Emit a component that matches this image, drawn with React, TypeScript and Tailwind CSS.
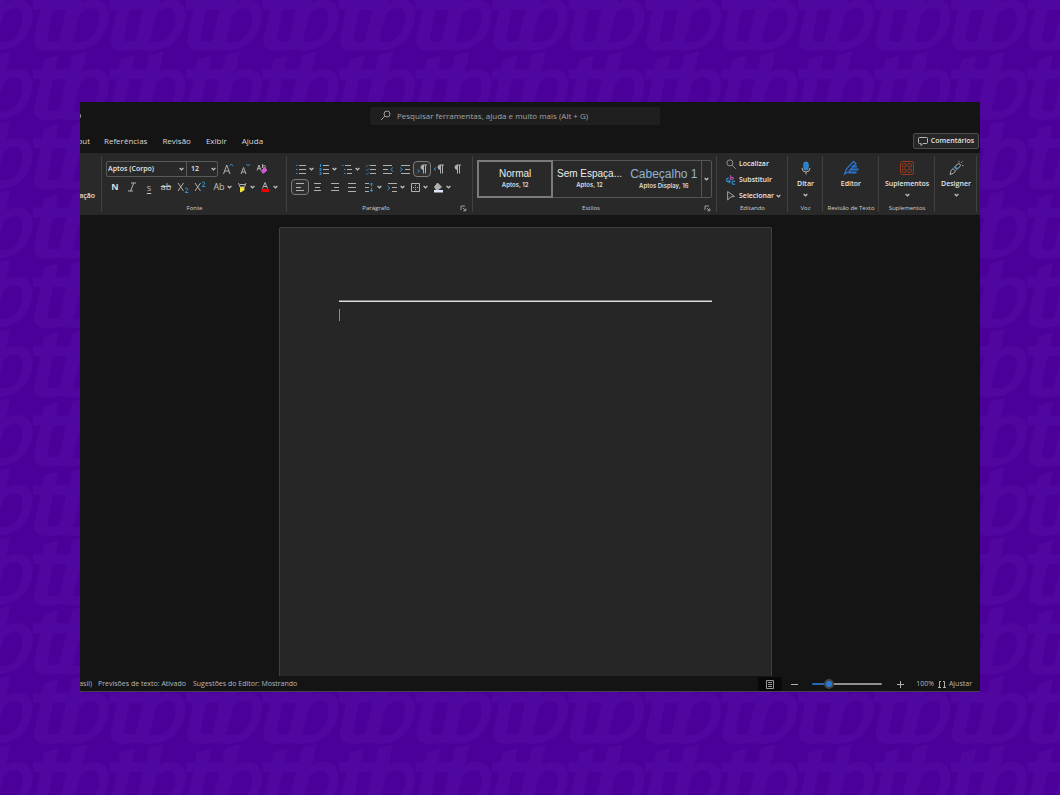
import React, { useState } from 'react';
import clsx from 'clsx';

const blue = '#2f8fd0';
const grey = '#b0b0b0';

const tabs = ['Referências', 'Revisão', 'Exibir', 'Ajuda'];

const styles = [
  { id: 'normal', name: 'Normal', detail: 'Aptos, 12', title: 'text-[10px] leading-3 text-[#ececec]' },
  { id: 'spacing', name: 'Sem Espaça...', detail: 'Aptos, 12', title: 'text-[10px] leading-3 text-[#ececec]' },
  { id: 'heading', name: 'Cabeçalho 1', detail: 'Aptos Display, 16', title: 'text-[12px] leading-[14px] text-[#8fb4d2]' },
];

type IconProps = { children: React.ReactNode; className?: string; size?: number };

// 16x16 canvas shared by every ribbon icon
const Icon = ({ children, className, size = 16 }: IconProps) => (
  <svg
    viewBox="0 0 16 16"
    width={size}
    height={size}
    fill="none"
    stroke={grey}
    strokeWidth="1"
    className={clsx('shrink-0', className)}
    aria-hidden="true"
  >
    {children}
  </svg>
);

const Chevron = ({ className }: { className?: string }) => (
  <svg
    viewBox="0 0 5 4"
    width="5"
    height="4"
    fill="none"
    stroke="#c0c0c0"
    strokeWidth="1.2"
    className={clsx('shrink-0', className)}
    aria-hidden="true"
  >
    <path d="M.6 1l1.900 1.800L4.400 1" />
  </svg>
);

type ToolProps = { label: string; children: React.ReactNode; active?: boolean };

const Tool = ({ label, children, active }: ToolProps) => (
  <button
    aria-label={label}
    aria-pressed={active}
    className={clsx(
      'flex h-4 shrink-0 items-center justify-center text-[9px] leading-4 text-[#c4c4c4]',
      active ? '-mx-px w-[18px] rounded-sm border border-[#7c7c7c] bg-[#303030]' : 'w-4'
    )}
  >
    {children}
  </button>
);

const SplitTool = ({ label, children }: ToolProps) => (
  <button aria-label={label} className="flex h-4 w-[23px] shrink-0 items-center text-[9px] leading-4 text-[#c4c4c4]">
    <span className="flex w-4 justify-center">{children}</span>
    <Chevron />
  </button>
);

const Launcher = () => (
  <button aria-label="Mais opções" className="absolute right-[6px] bottom-[3px]">
    <svg viewBox="0 0 7 7" width="7" height="7" fill="none" stroke="#a8a8a8" strokeWidth="0.9">
      <path d="M1 5V1h4M3 3l2.6 2.6M3.4 5.8h2.4V3.4" />
    </svg>
  </button>
);

type GroupProps = { label?: string; className: string; launcher?: boolean; children: React.ReactNode };

const Group = ({ label, className, launcher, children }: GroupProps) => (
  <section className={clsx('relative flex shrink-0 flex-col justify-between', className)}>
    {children}
    <span
      className={clsx(
        'mb-[3px] block h-2 text-center text-[6px] leading-2 whitespace-nowrap text-[#d0d0d0]',
        launcher && 'pr-2'
      )}
    >
      {label}
    </span>
    {launcher && <Launcher />}
    <span className="absolute top-[3px] right-0 bottom-[3px] w-px bg-[#404040]" />
  </section>
);

type BigToolProps = { label: string; icon: React.ReactNode; menu?: boolean };

const BigTool = ({ label, icon, menu }: BigToolProps) => (
  <button className="-mb-1 flex flex-col items-center pt-[7px] text-[7px] font-semibold text-[#e4e4e4]">
    {icon}
    <span className="leading-4">{label}</span>
    {menu && <Chevron className="mt-px" />}
  </button>
);

// Small line stacks used by the list and alignment buttons
const lines = (rows: number[][]) => rows.map(([x1, x2, y]) => <path key={y} d={`M${x1} ${y}H${x2}`} />);

const Backdrop = () => (
  <svg className="absolute inset-0 h-full w-full" aria-hidden="true">
    <defs>
      <pattern id="mark" x="33" y="-18.3" width="76.5" height="69.3" patternUnits="userSpaceOnUse">
        <path
          fill="#50079f"
          fillRule="evenodd"
          d="M0 18H9L11 8.5L25.5 4.5L22.500 18H36.500L39.500 4L54 .5L49.500 21Q57 17 64 18Q76 20 76 34Q75 51 64 61Q54 69 41 69Q35 69 29 67.800Q22 69 12 69Q1 69 1 60Q1 57 2 53L7.500 28H0ZM20 28L15 53Q13.500 60 18 60H24Q26 60 26.800 57L33.500 28ZM47 32L40 60Q46 61.500 53 59.500Q62 55 65.500 42Q68 27 60 26.500Q52 26 47 32Z"
        />
      </pattern>
    </defs>
    <rect width="100%" height="100%" fill="#4b0099" />
    <rect width="100%" height="100%" fill="url(#mark)" />
  </svg>
);

const FontGroup = () => (
  <Group label="Fonte" className="w-[185px]">
    <div className="flex flex-col gap-[2px] pt-2 pl-1">
      <div className="flex items-center">
        <div className="flex h-4 rounded-xs border border-[#5a5a5a] text-[7px] font-semibold text-[#e8e8e8]">
          <label className="relative flex w-[80px] items-center border-r border-[#5a5a5a]">
            <select aria-label="Fonte" className="w-full appearance-none bg-transparent pl-px leading-3 outline-none">
              <option>Aptos (Corpo)</option>
            </select>
            <Chevron className="absolute right-[2px]" />
          </label>
          <label className="relative flex w-[30px] items-center">
            <select aria-label="Tamanho da fonte" className="w-full appearance-none bg-transparent pl-1 leading-3 outline-none">
              <option>12</option>
            </select>
            <Chevron className="absolute right-px" />
          </label>
        </div>
        <div className="flex gap-px pl-[2px]">
          <Tool label="Aumentar fonte">
            <Icon>
              <path d="M3.500 13L6.800 4L10 13M4.500 10h4.500" />
              <path d="M9.500 5l1.800-2L13 5" stroke={blue} />
            </Icon>
          </Tool>
          <Tool label="Diminuir fonte">
            <Icon>
              <path d="M4 13L6.500 6.500L9 13M5 11h3" />
              <path d="M9.500 3l1.800 2L13 3" stroke={blue} />
            </Icon>
          </Tool>
          <Tool label="Limpar formatação">
            <Icon>
              <path d="M3 9.500L5 4l2 5.500M3.800 7.700h2.500M8.500 3v4M8.500 5q3-1.500 3 .7q0 1.800-2.500 1.300" />
              <path d="M7.500 9.500L10.500 6.500L13 9L10 12H8.500Z" fill="#c65bcb" stroke="#c65bcb" />
            </Icon>
          </Tool>
        </div>
      </div>
      <div className="flex gap-px pl-px">
        <Tool label="Negrito"><b className="font-bold text-[#dcdcdc]">N</b></Tool>
        <Tool label="Itálico">
          <Icon><path d="M7 4h5M4 12h5M9.800 4L6.500 12" /></Icon>
        </Tool>
        <Tool label="Sublinhado"><span className="text-[8px] leading-[9px] underline underline-offset-2">S</span></Tool>
        <Tool label="Tachado"><span className="line-through">ab</span></Tool>
        <Tool label="Subscrito">
          <Icon>
            <path d="M3 4l5.500 8M8.500 4L3 12" />
            <path d="M10 10q.3-1 1.500-1t1.300 1.200Q12.500 11.500 10 13.500h3.300" stroke={blue} />
          </Icon>
        </Tool>
        <Tool label="Sobrescrito">
          <Icon>
            <path d="M3 4l5.500 8M8.500 4L3 12" />
            <path d="M10 4q.3-1 1.500-1t1.300 1.200Q12.500 5.500 10 7.500h3.300" stroke={blue} />
          </Icon>
        </Tool>
        <div className="flex pl-[2px]">
          <SplitTool label="Maiúsculas e minúsculas">Ab</SplitTool>
          <SplitTool label="Cor do realce">
            <Icon>
              <path d="M4.500 4l1.500 4h4.500L12 4M6 5.500h5" />
              <path d="M6.500 8.500h3.500v2.500l-3.500 2z" fill="#f2e53a" stroke="#f2e53a" />
            </Icon>
          </SplitTool>
          <SplitTool label="Cor da fonte">
            <Icon>
              <path d="M5.500 9.500L8 3.500L10.500 9.500M6.300 7.500h3.400" />
              <path d="M4.500 10h7.500v3h-7.500z" fill="#ee0000" stroke="none" />
            </Icon>
          </SplitTool>
        </div>
      </div>
    </div>
  </Group>
);

const Pilcrow = () => (
  <>
    <path d="M9.500 4v8.500M11.500 4v8.500M13 4H9" />
    <path d="M9.500 4Q7 4 7 6.200T9.500 8.500Z" fill={grey} />
  </>
);

const ParagraphGroup = () => (
  <Group label="Parágrafo" className="w-[186px]" launcher>
    <div className="flex flex-col gap-[2px] pt-2 pl-[5px]">
      <div className="flex gap-px pl-px">
        <div className="flex">
          <SplitTool label="Marcadores">
            <Icon>
              {lines([[6, 13, 4.5], [6, 13, 8.5], [6, 13, 12.5]])}
              <path d="M3 4.500h1.500M3 8.500h1.500M3 12.500h1.500" stroke={blue} />
            </Icon>
          </SplitTool>
          <SplitTool label="Numeração">
            <Icon>
              {lines([[7, 13, 4.5], [7, 13, 8.5], [7, 13, 12.5]])}
              <path d="M4.500 3v3M3.500 7.500h1.500v2h-1.500M3.500 11.500h1.500v2h-1.500" stroke={blue} />
            </Icon>
          </SplitTool>
          <SplitTool label="Lista de vários níveis">
            <Icon>
              {lines([[6, 12, 4.5], [8, 13, 8.5], [8, 13, 12.5]])}
              <path d="M3 4.500h1.500M5 8.500h1.500M5 12.500h1.500" stroke={blue} />
            </Icon>
          </SplitTool>
        </div>
        <Tool label="Lista de tarefas">
          <Icon>
            {lines([[7, 13, 4.5], [7, 13, 8.5], [7, 13, 12.5]])}
            <path d="M3 4.500l1 1l2-2M3 8.500l1 1l2-2M3 12.500l1 1l2-2" stroke={blue} strokeWidth=".8" />
          </Icon>
        </Tool>
        <Tool label="Diminuir recuo">
          <Icon>
            {lines([[3, 12, 4.5], [3, 8, 8.5], [3, 12, 12.5]])}
            <path d="M13 6.500l-2.500 2l2.500 2" stroke={blue} />
          </Icon>
        </Tool>
        <Tool label="Aumentar recuo">
          <Icon>
            {lines([[4, 13, 4.5], [8, 13, 8.5], [4, 13, 12.5]])}
            <path d="M3 6.500l2.500 2l-2.500 2" stroke={blue} />
          </Icon>
        </Tool>
        <Tool label="Esquerda para a direita" active>
          <Icon>
            <Pilcrow />
            <path d="M3.500 8.500l2 1.500l-2 1.500" stroke={blue} />
          </Icon>
        </Tool>
        <Tool label="Direita para a esquerda">
          <Icon>
            <Pilcrow />
            <path d="M5 6.500l-2 1.500l2 1.500" stroke={blue} />
          </Icon>
        </Tool>
        <Tool label="Mostrar tudo">
          <Icon>
            <Pilcrow />
          </Icon>
        </Tool>
      </div>
      <div className="flex gap-px">
        <Tool label="Alinhar à esquerda" active>
          <Icon>{lines([[4, 12, 4.5], [4, 9, 8.5], [4, 12, 11.5]])}</Icon>
        </Tool>
        <Tool label="Centralizar">
          <Icon>{lines([[5, 12, 4.5], [6, 11, 8.5], [5, 12, 11.5]])}</Icon>
        </Tool>
        <Tool label="Alinhar à direita">
          <Icon>{lines([[5, 13, 4.5], [8, 13, 8.5], [5, 13, 11.5]])}</Icon>
        </Tool>
        <Tool label="Justificar">
          <Icon>{lines([[5, 13, 4.5], [5, 13, 8.5], [5, 13, 12.5]])}</Icon>
        </Tool>
        <div className="flex pl-px">
          <SplitTool label="Espaçamento">
            <Icon>
              {lines([[4, 8, 4.5], [4, 8, 8.5], [4, 8, 12.5]])}
              <path d="M10.500 4v3.500M10.500 9v3.500M9 5.500l1.500-1.500L12 5.500M9 11l1.500 1.500L12 11" stroke={blue} />
            </Icon>
          </SplitTool>
          <SplitTool label="Recuo">
            <Icon>
              {lines([[4, 13, 4.5], [8, 13, 8.5], [8, 13, 12.5]])}
              <path d="M3.500 7l2.500 2l-2.500 2" stroke={blue} />
            </Icon>
          </SplitTool>
          <SplitTool label="Bordas">
            <Icon>
              <path d="M4.500 4.500h8v8h-8z" />
              <path d="M6 8.500h5M8.500 6v5" strokeDasharray="1 1" />
            </Icon>
          </SplitTool>
          <SplitTool label="Sombreamento">
            <Icon>
              <path d="M7.500 4l4 4l-3 2.500h-2.500l-1.500-2.500z" fill={grey} />
              <path d="M4 11h9v2.500H4z" fill="#dfe6fa" stroke="none" />
            </Icon>
          </SplitTool>
        </div>
      </div>
    </div>
  </Group>
);

const StylesGroup = () => {
  const [selected, setSelected] = useState('normal');

  return (
    <Group label="Estilos" className="w-[244px]" launcher>
      <div className="pt-[7px] pr-[5px] pl-1">
        <div className="flex h-[38px] rounded-xs border border-[#555555]">
          {styles.map(style => (
            <button
              key={style.id}
              onClick={() => setSelected(style.id)}
              className={clsx(
                'flex flex-1 flex-col items-center justify-center whitespace-nowrap',
                selected === style.id && 'outline-2 outline-[#7b7b7b] -outline-offset-1'
              )}
            >
              <span className={clsx("font-['Liberation_Sans',Arial,sans-serif]", style.title)}>{style.name}</span>
              <span className="font-['Inter','Liberation_Sans',sans-serif] text-[6px] leading-[10px] font-semibold text-[#dcdcdc]">
                {style.detail}
              </span>
            </button>
          ))}
          <button aria-label="Mais estilos" className="flex w-[10px] items-center justify-center border-l border-[#555555]">
            <Chevron />
          </button>
        </div>
      </div>
    </Group>
  );
};

const EditingGroup = () => (
  <Group label="Editando" className="w-[71px]">
    <div className="-mb-1 flex flex-col gap-1 pt-[5px] pl-2 text-[7px] font-semibold text-[#e8e8e8]">
      <button className="flex h-3 items-center gap-[2px]">
        <Icon size={12}>
          <circle cx="6.500" cy="6.500" r="4" />
          <path d="M9.500 9.500l5 5" />
        </Icon>
        Localizar
      </button>
      <button className="flex h-3 items-center gap-[2px]">
        <Icon size={12}>
          <path d="M7.500 1.500v6M7.500 5q4-2 4 .5t-4 1.500" stroke="#b65bc0" strokeWidth="1.300" />
          <path d="M5 5Q1.500 6 2.500 10h4M5 8l2 2l-2 2M13.500 10q-4-1.500-4 1.500t4 2" stroke={blue} strokeWidth="1.500" />
        </Icon>
        Substituir
      </button>
      <button className="flex h-3 items-center gap-[2px]">
        <Icon size={12}>
          <path d="M3.500 2v11.500L7 9.500l5.500-1z" strokeWidth="1.200" />
        </Icon>
        Selecionar
        <Chevron />
      </button>
    </div>
  </Group>
);

const Ribbon = () => (
  <div className="flex h-[62px] bg-[#292929]">
    <Group className="w-[22px]">
      <span className="-mb-1 flex justify-end pt-[35px] pr-[7px] text-[7px] leading-4 font-semibold text-[#e0e0e0]">ação</span>
    </Group>
    <FontGroup />
    <ParagraphGroup />
    <StylesGroup />
    <EditingGroup />
    <Group label="Voz" className="w-[35px]">
      <BigTool
        label="Ditar"
        menu
        icon={
          <Icon>
            <rect x="5.800" y="2" width="4.400" height="8" rx="2.200" fill="#1f7fd0" stroke="#58a6e0" strokeWidth=".7" />
            <path d="M4 8q0 4 4 4t4-4M8 12v2.500" />
          </Icon>
        }
      />
    </Group>
    <Group label="Revisão de Texto" className="w-[56px]">
      <BigTool
        label="Editor"
        icon={
          <Icon>
            <path d="M1.500 14L3.500 9L10.500 1.500L12.800 3.500L6 11.500Z" stroke="#2b74cc" strokeWidth="1.300" />
            <path d="M9 6.500H14M7.500 9.500H15.500M5.500 12.500H13.500" stroke="#2b74cc" strokeWidth="2.200" />
          </Icon>
        }
      />
    </Group>
    <Group label="Suplementos" className="w-[56px]">
      <BigTool
        label="Suplementos"
        menu
        icon={
          <Icon>
            <g stroke="#983a1e">
              <rect x="1.500" y="1.500" width="13" height="13" rx="2" />
              <rect x="3.500" y="3.500" width="3.500" height="3.500" rx="1" />
              <rect x="9" y="3.500" width="3.500" height="3.500" rx="1" />
              <rect x="3.500" y="9" width="3.500" height="3.500" rx="1" />
              <rect x="9" y="9" width="3.500" height="3.500" rx="1" />
            </g>
          </Icon>
        }
      />
    </Group>
    <Group className="w-[42px]">
      <BigTool
        label="Designer"
        menu
        icon={
          <Icon>
            <path d="M2 14.500Q2.500 10 5 8.500L7.500 11Q6 14 2 14.500ZM6 7.800L9.500 4Q11 3 12 4.200T12 6.500L8.300 10" />
            <path d="M6 7.500l1.500-1.500l2.500 2.500l-1.500 1.500z" fill="#2f8fd0" stroke="none" />
            <path d="M11 .8v1.500M14.500 1.500l-1.500 1.500M15.500 5.500h-1.500" strokeWidth=".8" />
          </Icon>
        }
      />
    </Group>
  </div>
);

const StatusBar = () => {
  const [zoom, setZoom] = useState(20);

  return (
    <footer className="flex h-4 shrink-0 items-center justify-between border-b border-[#47404f] text-[7px] leading-3 text-[#b8b8b8]">
      <div className="flex pt-px whitespace-nowrap">
        <span className="flex w-3 justify-end">asil)</span>
        <span className="pl-[6px]">Previsões de texto: Ativado</span>
        <span className="pl-[7px]">Sugestões do Editor: Mostrando</span>
      </div>
      <div className="flex h-full items-center pt-px pr-2">
        <button aria-label="Layout de impressão" className="flex h-full w-6 items-center justify-center bg-[#090909]">
          <svg viewBox="0 0 8 9" width="8" height="9" fill="none" stroke="#a8a8a8" strokeWidth=".9">
            <path d="M.5.500h7v8h-7zM2 2.500h4M2 4.500h4M2 6.500h4" />
          </svg>
        </button>
        <button aria-label="Menos zoom" className="flex h-full w-6 items-center justify-center">
          <svg viewBox="0 0 7 7" width="7" height="7" stroke={grey}><path d="M0 3.500h7" /></svg>
        </button>
        <input
          type="range"
          aria-label="Zoom"
          value={zoom}
          onChange={e => setZoom(Number(e.target.value))}
          className="mx-[6px] h-[2px] w-[70px] appearance-none rounded-full bg-linear-to-r from-[#2668b8] from-20% to-[#909090] to-20% [&::-webkit-slider-thumb]:h-[10px] [&::-webkit-slider-thumb]:w-[10px] [&::-webkit-slider-thumb]:appearance-none [&::-webkit-slider-thumb]:rounded-full [&::-webkit-slider-thumb]:border-2 [&::-webkit-slider-thumb]:border-[#444444] [&::-webkit-slider-thumb]:bg-[#2b78d4]"
        />
        <button aria-label="Mais zoom" className="flex h-full w-6 items-center justify-center">
          <svg viewBox="0 0 7 7" width="7" height="7" stroke={grey}><path d="M0 3.500h7M3.500 0v7" /></svg>
        </button>
        <span className="pl-1">100%</span>
        <button className="flex items-center gap-[3px] pl-1">
          <svg viewBox="0 0 8 7" width="8" height="7" fill="none" stroke={grey}>
            <path d="M3 .5H1.500v5.500M0 6.500h3M5 .5h1.500v5.500M5 6.500h3" />
          </svg>
          Ajustar
        </button>
      </div>
    </footer>
  );
};

export default function App() {
  return (
    <div className="relative flex min-h-screen flex-col px-20 pt-[102px] pb-[103px] font-['Open_Sans','Noto_Sans',sans-serif]">
      <Backdrop />
      <main className="relative flex flex-1 flex-col overflow-hidden bg-[#141414]">
        {/* Title bar */}
        <header className="flex h-[27px] items-center pr-[31px]">
          <span className="h-1 w-px rounded-r-full bg-[#8a8a8a]" />
          <label className="mx-auto flex h-[18px] w-[290px] items-center gap-[6px] rounded-xs bg-[#1f1f1f] pl-[10px]">
            <svg viewBox="0 0 11 11" width="11" height="11" fill="none" stroke="#a0a0a0" className="shrink-0" aria-hidden="true">
              <circle cx="7" cy="4" r="3" />
              <path d="M4.800 6.200L1 10" />
            </svg>
            <input
              type="search"
              aria-label="Pesquisar"
              placeholder="Pesquisar ferramentas, ajuda e muito mais (Alt + G)"
              className="w-full bg-transparent text-[8px] leading-3 outline-none placeholder:text-[#a4a4a4]"
            />
          </label>
        </header>

        {/* Tabs */}
        <nav className="flex h-6 shrink-0 items-center text-[8px] text-[#d8d8d8]">
          <button className="flex w-[10px] justify-end">out</button>
          <div className="flex gap-[15px] pl-[14px]">
            {tabs.map(tab => (
              <button key={tab}>{tab}</button>
            ))}
          </div>
          <button className="mr-px ml-auto flex h-4 w-[66px] items-center justify-center gap-[3px] rounded-xs border border-[#4e4e4e] bg-[#262626] text-[7px] font-semibold text-[#e4e4e4]">
            <svg viewBox="0 0 10 9" width="10" height="9" fill="none" stroke="#b8b8b8" aria-hidden="true">
              <path d="M1.500.500h7a1 1 0 0 1 1 1v4a1 1 0 0 1-1 1H5l-2 2v-2H1.500a1 1 0 0 1-1-1v-4a1 1 0 0 1 1-1z" />
            </svg>
            Comentários
          </button>
        </nav>

        <Ribbon />

        {/* Document */}
        <div className="flex flex-1 justify-center overflow-hidden pt-3 pr-[9px]">
          <article className="w-[493px] rounded-t-xs border border-b-0 border-[#3f3f3f] bg-[#262626] px-[59px] pt-[72px]">
            <hr className="border-t border-b border-t-[#808080] border-b-[#dedede]" />
            <div className="mt-[7px] h-3 w-px bg-[#8a8a8a]" />
          </article>
        </div>

        <StatusBar />
      </main>
    </div>
  );
}
